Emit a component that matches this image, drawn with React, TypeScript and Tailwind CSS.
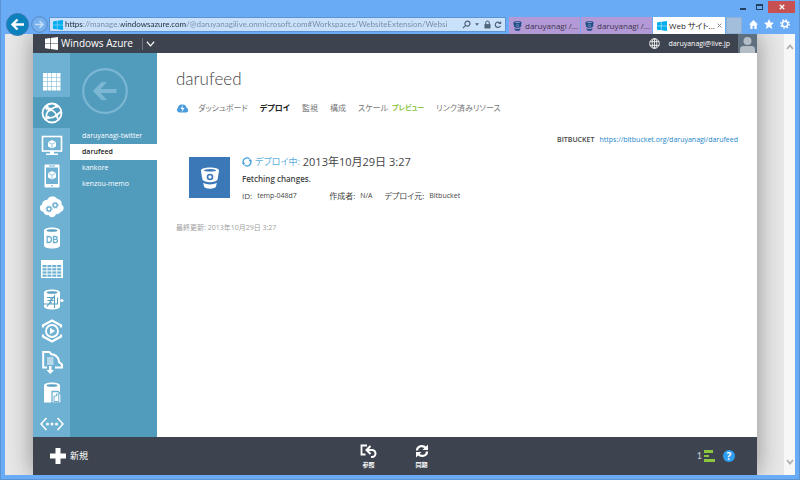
import React from "react";

const winTiles = "M0 2.2 6.2 1.3V7.6H0ZM7 1.2 16 0V7.6H7ZM0 8.4H6.2V14.7L0 13.8ZM7 8.4H16V16L7 14.8Z";

function WindowsLogo({ className }: { className: string }) {
  return (
    <svg viewBox="0 0 16 16" className={className} fill="currentColor" aria-hidden="true">
      <path d={winTiles} />
    </svg>
  );
}

function BucketIcon({ className, ring }: { className: string; ring: string }) {
  return (
    <svg viewBox="0 0 20 22" className={className} fill="currentColor" aria-hidden="true">
      <path d="M1 3.4C1 1.6 5 .5 10 .5s9 1.1 9 2.9c0 1-.7 4.600-1.500 9.400C16.500 14.200 13.500 15.200 10 15.200s-6.500-1-7.500-2.400C1.700 8 1 4.400 1 3.400Z" />
      <path d="M3.200 15.800c1.800 1.200 4.200 1.700 6.800 1.700s5-.5 6.800-1.700l-.8 3.700c-.4 1.300-3 2.200-6 2.200s-5.600-.9-6-2.200Z" />
      <ellipse cx="10" cy="3.300" rx="6.200" ry="1.200" fill={ring} />
      <circle cx="10" cy="10" r="2.500" fill="none" stroke={ring} strokeWidth="1.600" />
    </svg>
  );
}

type IconProps = { children: React.ReactNode };

function RailSvg({ children }: IconProps) {
  return (
    <svg viewBox="0 0 24 24" className="h-6 w-6" fill="none" stroke="currentColor" strokeWidth="1.5" aria-hidden="true">
      {children}
    </svg>
  );
}

const cube = (
  <>
    <path d="M12 7 16 9V13.500L12 15.500 8 13.500V9Z" fill="currentColor" stroke="none" />
    <path d="M8.500 9.400 12 11.200 15.500 9.400M12 11.200V15.500" stroke="#6fb1d2" strokeWidth=".7" />
  </>
);

const services: { name: string; icon: React.ReactNode }[] = [
  {
    name: "すべてのアイテム",
    icon: (
      <g stroke="none" fill="currentColor">
        {[3, 7.5, 12, 16.5].map((y) =>
          [3, 7.5, 12, 16.5].map((x) => <rect key={`${x}-${y}`} x={x} y={y} width="4" height="4" />)
        )}
      </g>
    ),
  },
  {
    name: "Web サイト",
    icon: (
      <>
        <circle cx="12" cy="12" r="9.500" strokeWidth="1.800" />
        <path d="M10 8.500C6.500 11 5.500 14 6.500 19M10 8.500C14 9.500 17 13 18 18.500M10 8.500 17.500 5M6 7.200 10 8.500M8 16.500C12 17.500 15 16 21 10.500" strokeWidth="1.700" />
        <path d="M5 5.500 8 3.500 9 7 6 9.500ZM14 3 19 6 16 7Z" fill="currentColor" stroke="none" />
        <circle cx="10" cy="8.500" r="1.900" fill="currentColor" stroke="none" />
        <circle cx="8" cy="16.500" r="1.800" fill="currentColor" stroke="none" />
        <circle cx="16.500" cy="14.800" r="1.700" fill="currentColor" stroke="none" />
      </>
    ),
  },
  {
    name: "仮想マシン",
    icon: (
      <>
        <rect x="2.500" y="3.500" width="19" height="14.500" strokeWidth="1.600" />
        <path d="M10 18h4v2.500h4V22H6v-1.500h4Z" fill="currentColor" stroke="none" />
        {cube}
      </>
    ),
  },
  {
    name: "モバイル サービス",
    icon: (
      <>
        <path d="M5.500 0.500h13a1 1 0 0 1 1 1v21a1 1 0 0 1-1 1h-13a1 1 0 0 1-1-1v-21a1 1 0 0 1 1-1ZM6 3.500v16.500h12V3.500Z" fill="currentColor" fillRule="evenodd" stroke="none" />
        <path d="M9 2h6M11 21.800h2" stroke="#6fb1d2" strokeWidth="1" />
        {cube}
      </>
    ),
  },
  {
    name: "クラウド サービス",
    icon: (
      <>
        <path d="M3.500 17A4 4 0 0 1 2 9.500 4.500 4.500 0 0 1 7 5 6 6 0 0 1 17.500 4 4.500 4.500 0 0 1 21.500 9.500 4 4 0 0 1 20.500 17 4 4 0 0 1 16 19 4 4 0 0 1 8.500 20 4 4 0 0 1 3.500 17Z" fill="currentColor" stroke="none" />
        <g stroke="#6fb1d2">
          <circle cx="9" cy="14" r="2" strokeWidth="1.400" />
          <circle cx="9" cy="14" r="3" strokeWidth=".9" strokeDasharray="1.200 1.200" />
          <circle cx="15.200" cy="10.200" r="2" strokeWidth="1.400" />
          <circle cx="15.200" cy="10.200" r="3" strokeWidth=".9" strokeDasharray="1.200 1.200" />
        </g>
      </>
    ),
  },
  {
    name: "SQL データベース",
    icon: (
      <>
        <path d="M4 4.500C4 2.800 7.500 1.500 12 1.500s8 1.300 8 3v15c0 1.700-3.500 3-8 3s-8-1.300-8-3Z" fill="currentColor" stroke="none" />
        <ellipse cx="12" cy="4.500" rx="5.500" ry="1.300" fill="#5aa0c0" stroke="none" />
        <path d="M7.200 10.500v6h1.300c2 0 3-1.200 3-3s-1-3-3-3ZM13.500 10.500v6h2c1.200 0 2-.6 2-1.700 0-.8-.6-1.400-1.500-1.500.7-.2 1.200-.7 1.200-1.300 0-.9-.7-1.500-1.800-1.500ZM13.500 13.300h2.500" stroke="#6fb1d2" strokeWidth="1.300" />
      </>
    ),
  },
  {
    name: "ストレージ",
    icon: (
      <>
        <path d="M1 3h22v18H1Z" fill="currentColor" stroke="none" />
        <g fill="#6fb1d2" stroke="none">
          {[8, 11.2, 14.4, 17.6].map((y) =>
            [2.5, 7.4, 12.3, 17.2].map((x) => <rect key={`${x}-${y}`} x={x} y={y} width="4" height="2.200" />)
          )}
        </g>
      </>
    ),
  },
  {
    name: "HDInsight",
    icon: (
      <>
        <path d="M4 4.500c0-1.700 3.500-3 8-3s8 1.300 8 3v14c0 1.700-3.500 3-8 3s-8-1.300-8-3Z" fill="currentColor" stroke="none" />
        <ellipse cx="12" cy="4.500" rx="5.500" ry="1.300" fill="#5aa0c0" stroke="none" />
        <path d="M3 16H17.500V9.500M7 9.500h6.500M7.500 12.500h6M7 18.500l7.500-10.500V20M11 9v7" stroke="#5aa0c0" strokeWidth="1.100" />
        <path d="M18 12.500h3" strokeWidth="1.500" />
        <circle cx="22" cy="12.500" r="1.500" fill="currentColor" stroke="none" />
      </>
    ),
  },
  {
    name: "メディア サービス",
    icon: (
      <>
        <path d="M3 8.500V6.500L12 1.500l9 5V8.500M3 15.500v2l9 5 9-5V15.500" strokeWidth="2.200" />
        <circle cx="12" cy="12" r="6" strokeWidth="1.800" />
        <path d="M10 8.800v6.400l5-3.200Z" fill="currentColor" stroke="none" />
      </>
    ),
  },
  {
    name: "サービス バス",
    icon: (
      <>
        <path d="M7 17.500H3.200V2H9.500L12 5M11 4.500h2.500C17 6 19 9 19 12l3 2.500v3H15" strokeWidth="2" />
        <path d="M7 7h7v8H7Z" fill="#6fb1d2" stroke="none" />
        <path d="M7 8h6.500M7 10h6.500M7 12h6.500M7 14h6.500" strokeWidth="1.200" />
        <path d="M9 16h2.500v4H14l-3.800 4L6.500 20H9Z" fill="currentColor" stroke="none" />
      </>
    ),
  },
  {
    name: "SQL レポート",
    icon: (
      <>
        <path d="M4 4.500c0-1.700 3.500-3 8-3s8 1.300 8 3v17H4Z" fill="currentColor" stroke="none" />
        <ellipse cx="12" cy="4.500" rx="5.500" ry="1.300" fill="#5aa0c0" stroke="none" />
        <path d="M12 10.500h6l3 3V22h-9Z" fill="currentColor" stroke="#6fb1d2" strokeWidth="1.300" />
        <path d="M14 20.500V15h2.500V13h2.300V20.500Z" stroke="#6fb1d2" strokeWidth="1" />
      </>
    ),
  },
  {
    name: "ネットワーク",
    icon: (
      <>
        <path d="M6.500 6 1 12 6.500 18M17.500 6l5.500 6L17.500 18" strokeWidth="1.600" />
        <g fill="currentColor" stroke="none">
          <circle cx="7.500" cy="12" r="1.500" />
          <circle cx="12" cy="12" r="1.500" />
          <circle cx="16.500" cy="12" r="1.500" />
        </g>
      </>
    ),
  },
];

const sites = ["daruyanagi-twitter", "darufeed", "kankore", "kenzou-memo"];

function BrowserChrome() {
  return (
    <header className="shrink-0 text-[#1e1e1e]">
      <div className="flex h-[17px] items-start justify-end pt-px">
        <button aria-label="最小化" className="flex h-3 w-[17px] items-end justify-center pb-[3px]">
          <span className="h-[2px] w-[6px] bg-[#24405f]" />
        </button>
        <button aria-label="最大化" className="flex h-3 w-[17px] items-center justify-center">
          <span className="h-[6px] w-[7px] border border-t-2 border-[#24405f]" />
        </button>
        <button aria-label="閉じる" className="flex h-3 w-[27px] items-center justify-center bg-[#c75050] text-white">
          <svg viewBox="0 0 8 8" className="h-[6px] w-[6px]" stroke="currentColor" strokeWidth="1.600">
            <path d="M1 1 7 7M7 1 1 7" />
          </svg>
        </button>
      </div>
      <div className="flex h-[17px] items-start">
        <button aria-label="戻る" className="relative z-10 -mt-1 ml-px h-[23px] w-[23px] shrink-0 text-white">
          <svg viewBox="0 0 23 23" className="h-full w-full" fill="none">
            <circle cx="11.500" cy="11.500" r="11" fill="#0c82bd" stroke="#3a78b4" />
            <path d="M18 11.500H7M11.500 6.500l-5 5 5 5" stroke="currentColor" strokeWidth="2.400" />
          </svg>
        </button>
        <button aria-label="進む" className="-mt-px ml-[2px] h-[17px] w-[17px] shrink-0 text-[#c4def8]">
          <svg viewBox="0 0 17 17" className="h-full w-full" fill="none">
            <circle cx="8.500" cy="8.500" r="7.800" fill="#77b0ee" stroke="#5488c4" />
            <path d="M4 8.500h8M8.500 5l3.500 3.500L8.500 12" stroke="currentColor" strokeWidth="1.600" />
          </svg>
        </button>
        <div className="ml-px flex h-[15px] min-w-0 flex-1 items-center border border-[#5b93d4] bg-[#c9e1fb] px-[3px]">
          <WindowsLogo className="h-[10px] w-[10px] shrink-0 text-[#00adef]" />
          <input
            aria-label="アドレス"
            readOnly
            value="https://manage.windowsazure.com/@daruyanagilive.onmicrosoft.com#Workspaces/WebsiteExtension/Websi"
            className="ml-[2px] h-[13px] min-w-0 flex-1 bg-[linear-gradient(90deg,#1e2a38_18px,#7488a0_18px,#7488a0_56px,#1e2a38_56px,#1e2a38_121px,#7488a0_121px)] bg-clip-text font-['Lato',sans-serif] text-[8px] leading-[13px] text-transparent outline-none"
          />
          <span className="ml-[3px] flex shrink-0 items-center text-[#50647a]">
            <svg viewBox="0 0 10 10" className="h-[9px] w-[9px]" fill="none" stroke="currentColor" strokeWidth="1.300">
              <circle cx="6" cy="4" r="2.800" />
              <path d="M4 6 1 9" />
            </svg>
            <svg viewBox="0 0 6 4" className="ml-1 h-[3px] w-[4px]" fill="currentColor"><path d="M0 0h6L3 4Z" /></svg>
            <svg viewBox="0 0 8 10" className="ml-[5px] h-[9px] w-[7px]" fill="currentColor">
              <path d="M.5 4.500h7V9.500h-7Z" />
              <path d="M2 5V3a2 2 0 0 1 4 0v2" fill="none" stroke="currentColor" strokeWidth="1.200" />
            </svg>
            <svg viewBox="0 0 10 10" className="ml-[3px] h-[9px] w-[8px]" fill="none" stroke="currentColor" strokeWidth="1.500">
              <path d="M8 6.500A3.300 3.300 0 1 1 7 2.800" />
              <path d="M9 .5v4H5Z" fill="currentColor" stroke="none" />
            </svg>
          </span>
        </div>
        <nav aria-label="タブ" className="ml-[3px] flex h-[17px] shrink-0 gap-px text-[8px]">
          {[0, 1].map((n) => (
            <button key={n} className="flex w-[71px] items-center gap-[3px] bg-[#b39ad6] pl-1 text-[#3d3350]">
              <BucketIcon className="h-[10px] w-[9px] shrink-0 text-[#1f4f86]" ring="#8f9fd0" />
              <span className="whitespace-nowrap">daruyanagi /...</span>
            </button>
          ))}
          <button className="flex w-[72px] items-center gap-[2px] bg-white pr-1 pl-1">
            <WindowsLogo className="h-[10px] w-[10px] shrink-0 text-[#00adef]" />
            <span className="whitespace-nowrap">Web サイト...</span>
            <svg viewBox="0 0 8 8" className="ml-auto h-[5px] w-[5px] shrink-0" stroke="#888" strokeWidth="1.500"><path d="M1 1 7 7M7 1 1 7" /></svg>
          </button>
          <button aria-label="新しいタブ" className="w-4 border border-[#8db0d6] bg-[#a3bedb]" />
        </nav>
        <div className="ml-[7px] mr-[5px] flex h-[14px] shrink-0 items-center gap-[6px] text-white">
          <button aria-label="ホーム">
            <svg viewBox="0 0 10 10" className="h-[9px] w-[9px]" fill="currentColor"><path d="M5 0 10 5H8.500V10H6V6.500H4V10H1.500V5H0Z" /></svg>
          </button>
          <button aria-label="お気に入り">
            <svg viewBox="0 0 10 10" className="h-[10px] w-[10px]" fill="currentColor"><path d="M5 0 6.500 3.500 10 3.800 7.300 6.200 8.200 10 5 7.900 1.800 10 2.700 6.200 0 3.800 3.500 3.500Z" /></svg>
          </button>
          <button aria-label="ツール">
            <svg viewBox="0 0 10 10" className="h-[10px] w-[10px]" fill="none" stroke="currentColor">
              <circle cx="5" cy="5" r="2.800" strokeWidth="1.600" />
              <circle cx="5" cy="5" r="4.200" strokeWidth="1.300" strokeDasharray="1.650 1.650" />
            </svg>
          </button>
        </div>
      </div>
    </header>
  );
}

function PortalHeader() {
  return (
    <header className="flex h-[19px] shrink-0 items-center bg-[#3e444f] text-white">
      <WindowsLogo className="ml-3 h-[13px] w-[13px]" />
      <span className="ml-[3px] text-[10px] leading-[19px]">Windows Azure</span>
      <span className="ml-[9px] h-3 w-px bg-[#70757e]" />
      <button aria-label="メニュー" className="ml-[3px]">
        <svg viewBox="0 0 10 6" className="h-[6px] w-[9px]" fill="none" stroke="currentColor" strokeWidth="1.300"><path d="M1 .5 5 5 9 .5" /></svg>
      </button>
      <button aria-label="言語" className="ml-auto">
        <svg viewBox="0 0 12 12" className="h-[11px] w-[11px]" fill="none" stroke="currentColor" strokeWidth=".9">
          <circle cx="6" cy="6" r="5.300" />
          <ellipse cx="6" cy="6" rx="2.500" ry="5.300" />
          <path d="M6 .7V11.300M1 4h10M1 8h10" />
        </svg>
      </button>
      <span className="ml-2 text-[7px] leading-[19px]">daruyanagi@live.jp</span>
      <svg viewBox="0 0 19 19" className="ml-2 h-[19px] w-[19px] bg-[#5f7080]" fill="#b4bcc4" aria-hidden="true">
        <circle cx="9.500" cy="7" r="4" />
        <path d="M2 19v-4c0-2 1.500-3 3.500-3h8c2 0 3.500 1 3.500 3v4Z" />
      </svg>
    </header>
  );
}

function Sidebar() {
  return (
    <>
      <nav aria-label="サービス" className="flex w-[37px] shrink-0 flex-col overflow-hidden bg-[#6fb1d2] pt-[13px]">
        {services.map((s, i) => (
          <button
            key={s.name}
            aria-label={s.name}
            className={
              i === 1
                ? "mb-px flex h-[31px] shrink-0 items-center justify-center bg-[#519bbd] text-white"
                : "flex h-[31px] shrink-0 items-center justify-center text-white"
            }
          >
            <RailSvg>{s.icon}</RailSvg>
          </button>
        ))}
      </nav>
      <nav aria-label="Web サイト" className="w-[87px] shrink-0 bg-[#519bbd] pt-[15px]">
        <button aria-label="戻る" className="ml-3 block h-[46px] w-[46px] text-[#7bb6d3]">
          <svg viewBox="0 0 46 46" className="h-full w-full" fill="none" stroke="currentColor">
            <circle cx="23" cy="23" r="21.800" strokeWidth="2.200" />
            <path d="M34.500 21v4H18.500L25 32h-5.500L11 23l8.500-9H25L18.500 21Z" fill="currentColor" stroke="none" />
          </svg>
        </button>
        <ul className="mt-[14px] text-[7px]">
          {sites.map((s) => (
            <li key={s}>
              <a
                href="#site"
                className={
                  s === "darufeed"
                    ? "block h-4 bg-white pl-3 leading-4 font-semibold text-[#222]"
                    : "block h-4 pl-3 leading-4 text-white"
                }
              >
                {s}
              </a>
            </li>
          ))}
        </ul>
      </nav>
    </>
  );
}

function Content() {
  return (
    <main className="min-w-0 flex-1 bg-white px-[19px] text-[8px] text-[#444]">
      <h1 className="mt-3 font-['Lato',sans-serif] text-[17px] leading-[28px] font-light text-[#444]">darufeed</h1>
      <nav aria-label="ページ" className="mt-[9px] flex h-3 items-center gap-3 whitespace-nowrap text-[#777]">
        <a href="#quickstart" aria-label="クイック スタート" className="-mr-[3px]">
          <svg viewBox="0 0 26 18" className="h-[9px] w-[13px]" aria-hidden="true">
            <path d="M6 17A5.500 5.500 0 0 1 4 7.500 8 8 0 0 1 13 1a8 8 0 0 1 8 6.500A5 5 0 0 1 21 17Z" fill="#4a9bdc" />
            <path d="M14 2 9 10h4l-2 7 6-9h-4Z" fill="#fff" />
          </svg>
        </a>
        <a href="#dashboard">ダッシュボード</a>
        <a href="#deploy" className="font-semibold text-[#222]">デプロイ</a>
        <a href="#monitor">監視</a>
        <a href="#config">構成</a>
        <a href="#scale" className="flex items-center gap-1">
          スケール<span className="text-[7px] font-semibold text-[#8cc63f]">プレビュー</span>
        </a>
        <a href="#links">リンク済みリソース</a>
      </nav>
      <p className="mt-5 flex justify-end gap-[5px] text-[7px] leading-3">
        <span className="font-semibold">BITBUCKET</span>
        <a href="#repo" className="text-[#1b86c8]">https://bitbucket.org/daruyanagi/darufeed</a>
      </p>
      <section className="mt-[10px] flex gap-[12px] pl-[13px]">
        <div className="mt-px flex h-[41px] w-[41px] shrink-0 items-center justify-center bg-[#3b78b8] text-white">
          <BucketIcon className="h-[22px] w-5" ring="#3b78b8" />
        </div>
        <div className="whitespace-nowrap">
          <h2 className="flex h-[12px] items-center text-[11px] leading-3">
            <svg viewBox="0 0 12 12" className="mr-[3px] h-[10px] w-[10px]" fill="none" stroke="#3da0e0" strokeWidth="1.500" aria-hidden="true">
              <path d="M2 8A4.500 4.500 0 0 1 9 2.500M10 4A4.500 4.500 0 0 1 3 9.500" />
              <path d="M0 7h4L2 10ZM8 5h4L10 2Z" fill="#3da0e0" stroke="none" />
            </svg>
            <span className="mr-[3px] text-[9px] text-[#5aaedd]">デプロイ中:</span>
            2013年10月29日 3:27
          </h2>
          <p className="mt-[5px] leading-3 font-semibold">Fetching changes.</p>
          <dl className="mt-[5px] flex gap-[5px] leading-3">
            <dt>ID:</dt>
            <dd className="w-[67px] text-[7px]">temp-048d7</dd>
            <dt>作成者:</dt>
            <dd className="mr-[7px] text-[7px]">N/A</dd>
            <dt>デプロイ元:</dt>
            <dd className="text-[7px]">Bitbucket</dd>
          </dl>
        </div>
      </section>
      <p className="mt-5 text-[7px] leading-3 text-[#a0a0a0]">最終更新: 2013年10月29日 3:27</p>
    </main>
  );
}

function CommandBar() {
  return (
    <footer className="grid h-[38px] shrink-0 grid-cols-[1fr_auto_1fr] items-center bg-[#3e444f] text-white">
      <button className="ml-[17px] flex items-center gap-[4px] justify-self-start text-[9px]">
        <svg viewBox="0 0 16 16" className="h-4 w-4" fill="currentColor" aria-hidden="true"><path d="M5.500 0h5v5.500H16v5h-5.500V16h-5v-5.500H0v-5h5.500Z" /></svg>
        新規
      </button>
      <div className="flex gap-[36px] text-[6px] leading-[8px] font-bold">
        <button className="flex w-[17px] flex-col items-center gap-[3px]">
          <svg viewBox="0 0 17 14" className="h-[14px] w-[17px]" fill="none" stroke="currentColor" strokeWidth="1.800" aria-hidden="true">
            <path d="M7 1.500H1.500V10.500H5.500" />
            <path d="M7 6H12A3.500 3.500 0 0 1 12 13H11M10.500 2 6.500 6 10.500 10" strokeWidth="2" />
          </svg>
          参照
        </button>
        <button className="flex w-[17px] flex-col items-center gap-[3px]">
          <svg viewBox="0 0 14 14" className="h-[14px] w-[14px]" fill="none" stroke="currentColor" strokeWidth="2.200" aria-hidden="true">
            <path d="M2 6.500C2 2 8 .5 10.800 4M12 7.500C12 12 6 13.500 3.200 10" />
            <path d="M13 .5V6H7.500ZM1 13.500V8H6.500Z" fill="currentColor" stroke="none" />
          </svg>
          同期
        </button>
      </div>
      <div className="mr-[22px] flex items-center justify-self-end">
        <button className="flex items-center gap-[2px] font-['Lato',sans-serif] text-[9px] text-[#c8ccd2]">
          1
          <span className="flex flex-col gap-[2px]">
            <span className="h-[3px] w-[9px] bg-[#8cc63f]" />
            <span className="h-[2px] w-[5px] bg-[#8cc63f]" />
            <span className="h-[3px] w-[11px] bg-[#8cc63f]" />
          </span>
        </button>
        <button aria-label="ヘルプ" className="ml-2 flex h-3 w-3 items-center justify-center rounded-full bg-[#2f9df0] text-[10px] leading-3 font-bold">?</button>
      </div>
    </footer>
  );
}

export default function App() {
  return (
    <div
      lang="ja"
      className="flex h-screen flex-col border border-t-0 border-[#5b93d4] bg-[#6aabf5] px-1 pb-1 font-['Open_Sans','Noto_Sans_CJK_JP',sans-serif] [font-feature-settings:'palt']"
    >
      <BrowserChrome />
      <div className="flex min-h-0 flex-1 overflow-hidden bg-[#e8e8e8]">
        <div className="min-w-0 flex-1 overflow-hidden pr-[27px] pl-[28px]">
          <div className="flex h-full flex-col shadow-[0_0_24px_rgba(0,0,0,0.4)]">
            <PortalHeader />
            <div className="flex min-h-0 flex-1">
              <Sidebar />
              <Content />
            </div>
            <CommandBar />
          </div>
        </div>
        <div className="flex w-[11px] shrink-0 flex-col items-center justify-between bg-[#f7f7f7] py-[10px] text-[#b0b0b0]">
          <svg viewBox="0 0 8 6" className="h-[6px] w-[8px]" fill="none" stroke="currentColor" strokeWidth="1.800"><path d="M1 5 4 1.500 7 5" /></svg>
          <svg viewBox="0 0 8 6" className="h-[6px] w-[8px]" fill="none" stroke="currentColor" strokeWidth="1.800"><path d="M1 1 4 4.500 7 1" /></svg>
        </div>
      </div>
    </div>
  );
}
